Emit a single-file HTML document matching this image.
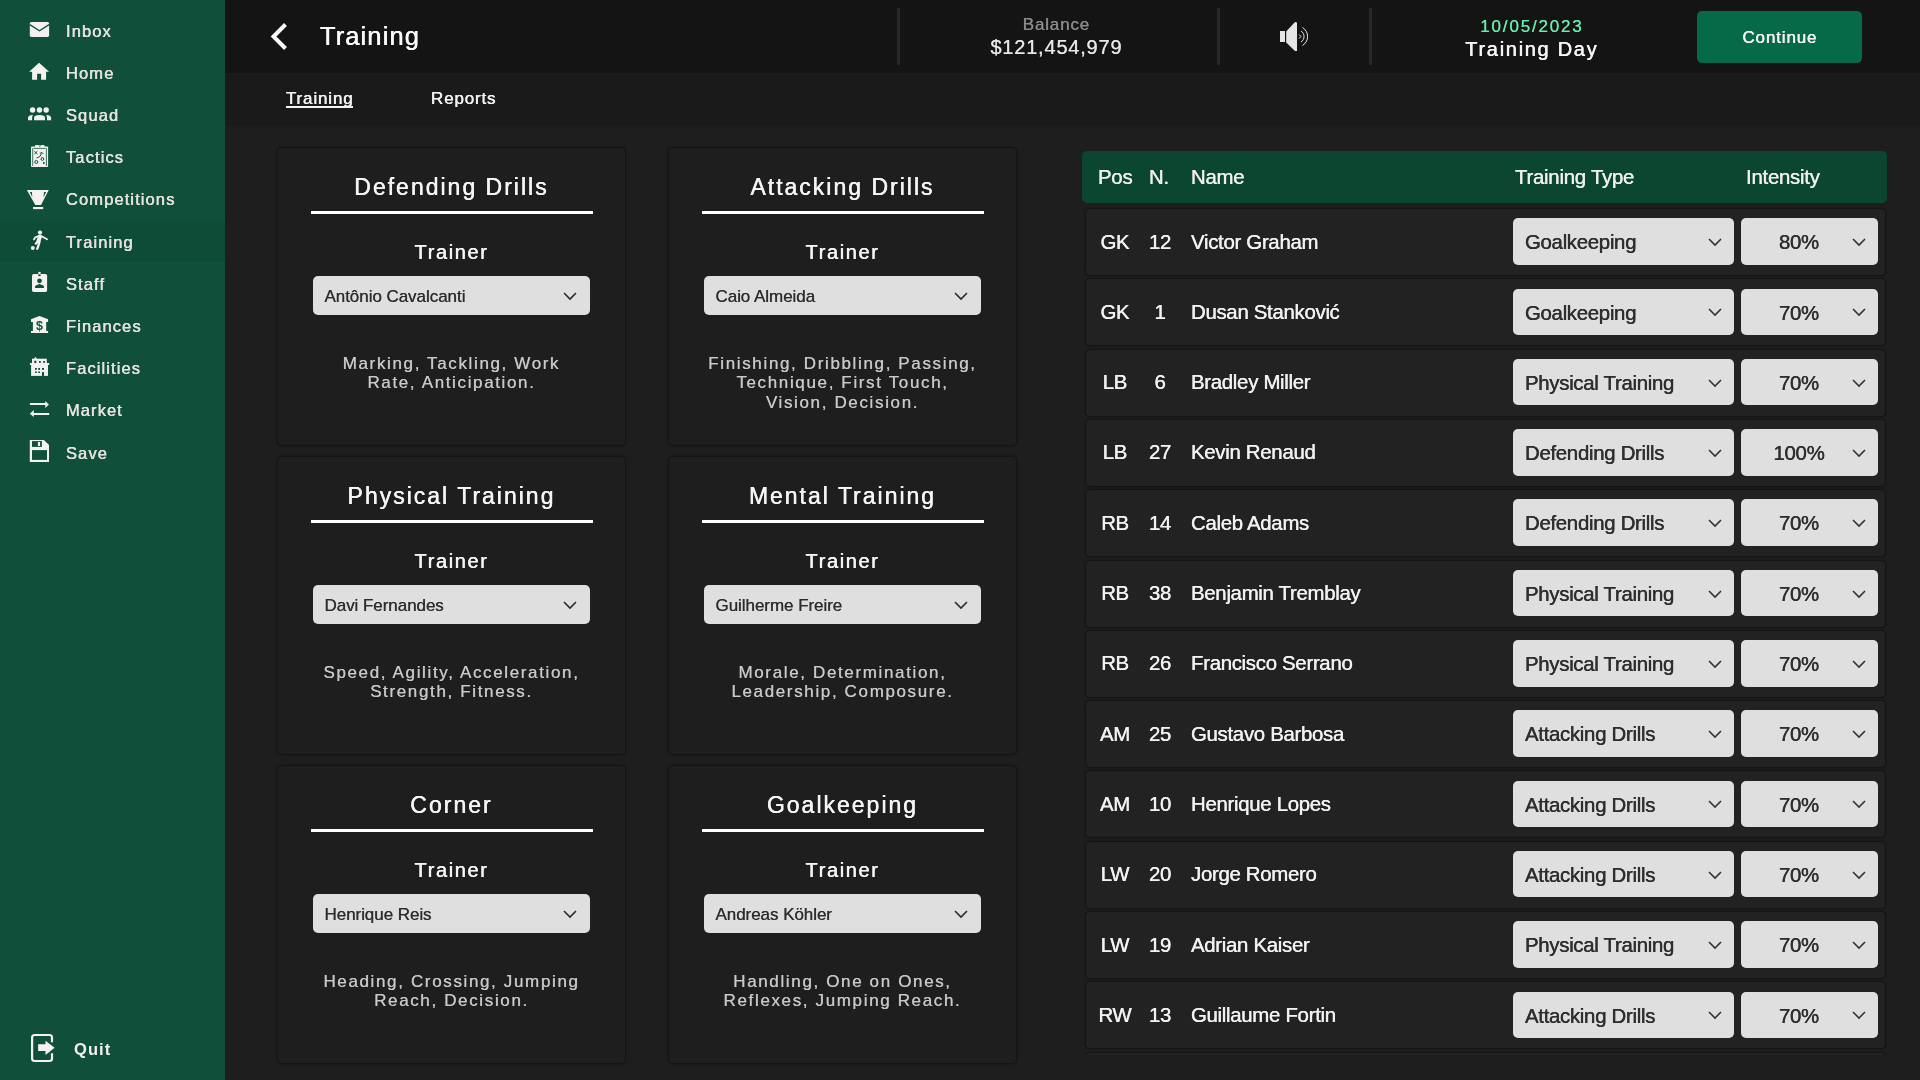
<!DOCTYPE html>
<html lang="en">
<head>
<meta charset="utf-8">
<title>Training</title>
<style>
*{box-sizing:border-box;margin:0;padding:0}
html,body{will-change:transform;width:1920px;height:1080px;overflow:hidden;background:#1e1e1e;font-family:"Liberation Sans",Arial,sans-serif;color:#fff}
#side{position:absolute;left:0;top:0;width:225px;height:1080px;background:#10503a}
.nav{position:absolute;left:0;width:225px;height:42px}
.nav.act{background:#0e4c37;height:41.3px}
#icons{position:absolute;left:0;top:0}
.nav span{position:absolute;left:66px;top:10.6px;font-size:16.5px;line-height:20px;letter-spacing:1.1px;color:#e6e2df;text-shadow:.25px 0 0 rgba(230,226,223,.8),-.25px 0 0 rgba(230,226,223,.8)}
#top{position:absolute;left:225px;top:0;width:1695px;height:73px;background:#141414}
#tabs{position:absolute;left:225px;top:73px;width:1695px;height:53px;background:#1a1a1a}
.sep{position:absolute;top:8px;width:3px;height:57px;background:#282828}
#title{position:absolute;left:95px;top:20px;font-size:25.5px;line-height:32px;letter-spacing:1.1px;color:#fafafa;text-shadow:.25px 0 0 rgba(250,250,250,.8),-.25px 0 0 rgba(250,250,250,.8)}
.tab{position:absolute;top:16px;font-size:17px;line-height:20px;letter-spacing:.85px;color:#f2f2f2;text-shadow:.25px 0 0 rgba(242,242,242,.8),-.25px 0 0 rgba(242,242,242,.8)}
.card{position:absolute;margin:-1px 0 0 0;width:349px;height:299px;border:1px solid #141414;border-radius:4.5px;background:#1e1e1e;box-shadow:0 0 3px rgba(0,0,0,.25);text-align:center}
.card h2{position:absolute;left:0;right:0;top:23.8px;font-size:23px;line-height:28px;font-weight:normal;letter-spacing:2px;color:#f5f5f5;text-shadow:.25px 0 0 rgba(245,245,245,.8),-.25px 0 0 rgba(245,245,245,.8)}
.card .ln{position:absolute;left:33px;width:282px;top:62px;height:3px;background:#fff}
.card h3{position:absolute;left:0;right:0;top:91px;font-size:20px;line-height:24px;font-weight:normal;letter-spacing:1.6px;color:#f5f5f5;text-shadow:.25px 0 0 rgba(245,245,245,.8),-.25px 0 0 rgba(245,245,245,.8)}
.sel{position:absolute;background:#dfdfdf;border-radius:5px;color:#2b2b2b;text-align:left}
.card .sel{left:34.5px;top:127px;width:277.5px;height:38.5px;font-size:17px;line-height:42px;padding-left:12px;letter-spacing:-.05px;text-shadow:.25px 0 0 rgba(43,43,43,.5),-.25px 0 0 rgba(43,43,43,.5)}
.sel svg{position:absolute;fill:none;stroke:#2b2b2b;stroke-width:1.6}
.card .sel svg{right:13px;top:14.5px;width:14px;height:10px}
.card p{position:absolute;left:10px;right:10px;top:205px;font-size:17px;line-height:19.4px;letter-spacing:1.64px;color:#c9c9c9;text-shadow:.25px 0 0 rgba(201,201,201,.5),-.25px 0 0 rgba(201,201,201,.5)}

.hc{position:absolute;text-align:center;line-height:20px}
#cont{position:absolute;left:1472px;top:10.5px;width:165px;height:52px;border-radius:5px;background:#056a47;color:#f4f4f4;text-align:center;line-height:54px;font-size:17px;letter-spacing:.85px;text-indent:.85px;text-shadow:.25px 0 0 rgba(244,244,244,.8),-.25px 0 0 rgba(244,244,244,.8)}
#tbl{position:absolute;left:1082px;top:151px;width:806px;height:904px;overflow:hidden}
#th{position:absolute;left:0;top:0;width:805px;height:52px;background:#0b4630;border-radius:5px}
#th span{position:absolute;top:14px;font-size:20.4px;line-height:24px;letter-spacing:-.25px;color:#f0f0f0;text-shadow:.25px 0 0 rgba(240,240,240,.7),-.25px 0 0 rgba(240,240,240,.7)}
.row{position:absolute;left:3px;width:801px;height:68px;background:#222;border:1px solid #141414;border-radius:4.5px;box-shadow:0 0 2px rgba(0,0,0,.25)}
.row span{position:absolute;top:20.5px;font-size:20.4px;line-height:24px;letter-spacing:-.3px;color:#f2f2f2;text-shadow:.25px 0 0 rgba(242,242,242,.7),-.25px 0 0 rgba(242,242,242,.7)}
.row .c{text-align:center}
.row .nm{left:105px}
.row .sel{top:9.3px;height:46.5px;font-size:20.4px;line-height:49px;letter-spacing:-.3px;color:#2e2e2e;text-shadow:.25px 0 0 rgba(46,46,46,.8),-.25px 0 0 rgba(46,46,46,.8)}
.row .s1{left:427px;width:221px;padding-left:12px}
.row .s2{left:655px;width:137px}
.row .s2 i{font-style:normal;position:absolute;left:0;width:116px;text-align:center}
.row .sel svg{right:12.5px;top:18.8px;width:14px;height:10px;stroke:#333}
.card>*{margin-top:1px}
</style>
</head>
<body>
<div id="side">
<!--NAV-->
<div class="nav" style="top:10.0px"><span>Inbox</span></div>
<div class="nav" style="top:52.2px"><span>Home</span></div>
<div class="nav" style="top:94.4px"><span>Squad</span></div>
<div class="nav" style="top:136.6px"><span>Tactics</span></div>
<div class="nav" style="top:178.8px"><span>Competitions</span></div>
<div class="nav act" style="top:221.0px"><span>Training</span></div>
<div class="nav" style="top:263.2px"><span>Staff</span></div>
<div class="nav" style="top:305.4px"><span>Finances</span></div>
<div class="nav" style="top:347.6px"><span>Facilities</span></div>
<div class="nav" style="top:389.8px"><span>Market</span></div>
<div class="nav" style="top:432.0px"><span>Save</span></div>
<div class="nav quit" style="top:1028px"><span style="left:74px;font-weight:bold;text-shadow:none;color:#f2efed">Quit</span></div>
<svg id="icons" width="225" height="1080" viewBox="0 0 225 1080" fill="#f4f2f0">
<rect x="29.8" y="22" width="19.3" height="14.9" rx="1.6"/><path d="M29.8 24.600 L39.450 30.700 L49.100 24.600" fill="none" stroke="#10503a" stroke-width="1.300"/>
<path transform="translate(27.1,59.8)" d="M10 20v-6h4v6h5v-8h3L12 3 2 12h3v8z"/>
<circle cx="32.600" cy="110" r="2.700"/><circle cx="39.500" cy="110" r="2.700"/><circle cx="46.200" cy="110" r="2.700"/><path d="M34.100 120.200 V117.600 Q34.100 115 39.500 115 Q45 115 45 117.600 V120.200 Z"/><path d="M28 120.200 V117.800 Q28 115.300 32.900 115 Q32.100 116.500 32.100 118 V120.200 Z"/><path d="M51.100 120.200 V117.800 Q51.100 115.300 46.200 115 Q47 116.500 47 118 V120.200 Z"/>
<rect x="31" y="146.400" width="17.100" height="20.700" rx=".8"/><rect x="35" y="145" width="9.600" height="3" rx="1"/><g fill="none" stroke="#10503a"><path d="M32.700 148.300 V166 M46.400 148.300 V166 M33.500 148.400 H45.600" stroke-width=".8"/><path d="M38.800 145.200 L39.800 146.600 L40.800 145.200" stroke-width=".7"/><path d="M34.400 151.200 L37.400 154 M37.400 151.200 L34.400 154" stroke-width="1"/><path d="M36.500 158 Q40.500 157.500 41.500 153.500" stroke-width="1"/><path d="M39.800 153.600 L41.800 152.300 L43.400 154" stroke-width="1"/><circle cx="42.400" cy="159" r="1.400" stroke-width="1"/><circle cx="36.300" cy="162" r="1.500" stroke-width="1"/></g><circle cx="43.800" cy="163" r="1" fill="#10503a"/>
<path d="M26.900 189.900 H48.800 L41 205 H35.300 Z"/><rect x="33" y="207" width="10.200" height="2.100"/><path d="M29.900 192 H31.900 L32.300 197.200 Z M44 192 H46 L43.500 197.400 Z" fill="#10503a"/>
<circle cx="40" cy="232.500" r="2.100"/><circle cx="32.800" cy="248" r="2"/><g fill="none" stroke="#f4f2f0" stroke-linecap="round" stroke-linejoin="round"><path d="M40 236.500 L38.500 241" stroke-width="4"/><path d="M38.500 236 L35.300 237.300 L33.900 239.400" stroke-width="1.800"/><path d="M41.500 236.200 L44.800 238 L47 239.300" stroke-width="1.800"/><path d="M37.800 241.500 L35.900 243.600" stroke-width="2.400"/><path d="M39.500 242 L38.300 246 L37.200 248.800" stroke-width="2.300"/></g>
<rect x="32" y="274" width="15.100" height="17.900" rx="1.700"/><rect x="38.300" y="271.900" width="2.300" height="3"/><rect x="38.300" y="274.300" width="2.300" height="1.800" fill="#10503a"/><circle cx="39.500" cy="280.800" r="2.400" fill="#10503a"/><path d="M35 288 V286.600 Q35 285.300 39.500 284 Q44 285.300 44 286.600 V288 Z" fill="#10503a"/>
<path d="M39.500 316 L48.100 319.300 V322 H46.200 V331 H48.100 V333 H31 V331 H32.900 V322 H31 V319.300 Z"/><text x="39.500" y="329.600" font-size="12.500" font-weight="bold" text-anchor="middle" fill="#10503a" font-family="Liberation Sans,sans-serif">$</text>
<rect x="32" y="358.700" width="14.800" height="5"/><path d="M33.600 358.800 L35.400 356.900 L37.200 358.800 Z"/><rect x="29.900" y="362.900" width="19.300" height="2.200" rx=".6"/><rect x="31.100" y="364.500" width="16.900" height="11.400"/><g fill="#10503a"><path d="M34.300 363 V361.500 Q34.300 360.500 35.300 360.500 Q36.300 360.500 36.300 361.500 V363 Z"/><rect x="39" y="361" width="1.800" height="1.800"/><rect x="43.200" y="361" width="1.800" height="1.800"/><rect x="35" y="368" width="1.800" height="1.800"/><rect x="38.200" y="368" width="1.800" height="1.800"/><rect x="42" y="368" width="2" height="1.800"/><rect x="35" y="371.500" width="1.800" height="1.500"/><rect x="38.200" y="371.500" width="1.800" height="1.500"/><rect x="42" y="372" width="2" height="4"/></g>
<path d="M29.900 403.100 H45.300 V400.900 L48.900 404.400 L45.300 408 V405 H29.900 Z"/><path d="M49.200 413.100 H33.800 V409.900 L29.800 413.700 L33.800 417.100 V415 H49.200 Z"/>
<path d="M29.800 440 H43.900 L49 444.900 V462.100 H29.800 Z"/><rect x="32" y="441.100" width="9.900" height="5.800" fill="#10503a"/><rect x="37.900" y="442" width="2.200" height="4"/><rect x="32" y="450.100" width="15" height="9.800" fill="#10503a"/>
<path d="M52 1042.300 V1037.500 Q52 1035 49.500 1035 H34.600 Q32.100 1035 32.100 1037.500 V1058.500 Q32.100 1061 34.600 1061 H49.500 Q52 1061 52 1058.500 V1053.200" fill="none" stroke="#f4f2f0" stroke-width="2.200"/><path d="M38.100 1044.300 H45.500 V1040.800 L54.600 1047.800 L45.500 1055 V1051 H38.100 Z"/>
</svg>
<!--/NAV-->
</div>
<div id="top">
<!--TOP-->
<svg style="position:absolute;left:40px;top:20px" width="30" height="34" viewBox="0 0 30 34"><path d="M20.5 4.500 L8.5 16.500 L20.500 28.500" fill="none" stroke="#fafafa" stroke-width="4"/></svg>
<div id="title">Training</div>
<div class="sep" style="left:672px"></div>
<div class="sep" style="left:992px"></div>
<div class="sep" style="left:1144px"></div>
<div class="hc" style="left:671px;width:320px;top:15px;font-size:17px;color:#8c8c8c;letter-spacing:.85px;text-indent:.85px;text-shadow:.25px 0 0 rgba(140,140,140,.6),-.25px 0 0 rgba(140,140,140,.6)">Balance</div>
<div class="hc" style="left:671px;width:320px;top:34.6px;font-size:20px;color:#e8e8e8;letter-spacing:.8px;text-indent:.8px;line-height:24px;text-shadow:.25px 0 0 rgba(232,232,232,.5),-.25px 0 0 rgba(232,232,232,.5)">$121,454,979</div>
<svg style="position:absolute;left:1053px;top:20px" width="34" height="34" viewBox="0 0 34 34"><rect x="2" y="11" width="5" height="11" fill="#e6e6e6"/><path d="M8.200 11.400 L17 2 L19 2.500 L19 31 L17 31 L8.200 22.600Z" fill="#e6e6e6"/><path d="M21 14.500 L23 16.500 L21 18.500 M23 11 A6.500 6.500 0 0 1 23 22 M24.500 7.500 A10.500 10.500 0 0 1 24.500 25.500" fill="none" stroke="#fff" stroke-width=".9"/></svg>
<div class="hc" style="left:1146px;width:320px;top:16.7px;font-size:17px;color:#69f0ae;letter-spacing:1.8px;text-indent:1.8px;text-shadow:.25px 0 0 rgba(105,240,174,.5),-.25px 0 0 rgba(105,240,174,.5)">10/05/2023</div>
<div class="hc" style="left:1146px;width:320px;top:36.6px;font-size:20px;color:#f5f5f5;letter-spacing:1.7px;text-indent:1.7px;line-height:24px;text-shadow:.25px 0 0 rgba(245,245,245,.85),-.25px 0 0 rgba(245,245,245,.85)">Training Day</div>
<div id="cont">Continue</div>
<!--/TOP-->
</div>
<div id="tabs">
<div class="tab" style="left:61px">Training<i style="position:absolute;left:0;right:.85px;top:17.3px;height:1.8px;background:#f2f2f2"></i></div>
<div class="tab" style="left:206px">Reports</div>
</div>
<!--CARDS-->
<div class="card" style="left:277px;top:148px"><h2>Defending Drills</h2><div class="ln"></div><h3>Trainer</h3><div class="sel">Antônio Cavalcanti<svg viewBox="0 0 14 10"><path d="M1 2 L7 8 L13 2"/></svg></div><p>Marking, Tackling, Work<br>Rate, Anticipation.</p></div>
<div class="card" style="left:668px;top:148px"><h2>Attacking Drills</h2><div class="ln"></div><h3>Trainer</h3><div class="sel">Caio Almeida<svg viewBox="0 0 14 10"><path d="M1 2 L7 8 L13 2"/></svg></div><p>Finishing, Dribbling, Passing,<br>Technique, First Touch,<br>Vision, Decision.</p></div>
<div class="card" style="left:277px;top:457px"><h2>Physical Training</h2><div class="ln"></div><h3>Trainer</h3><div class="sel">Davi Fernandes<svg viewBox="0 0 14 10"><path d="M1 2 L7 8 L13 2"/></svg></div><p>Speed, Agility, Acceleration,<br>Strength, Fitness.</p></div>
<div class="card" style="left:668px;top:457px"><h2>Mental Training</h2><div class="ln"></div><h3>Trainer</h3><div class="sel">Guilherme Freire<svg viewBox="0 0 14 10"><path d="M1 2 L7 8 L13 2"/></svg></div><p>Morale, Determination,<br>Leadership, Composure.</p></div>
<div class="card" style="left:277px;top:766px"><h2>Corner</h2><div class="ln"></div><h3>Trainer</h3><div class="sel">Henrique Reis<svg viewBox="0 0 14 10"><path d="M1 2 L7 8 L13 2"/></svg></div><p>Heading, Crossing, Jumping<br>Reach, Decision.</p></div>
<div class="card" style="left:668px;top:766px"><h2>Goalkeeping</h2><div class="ln"></div><h3>Trainer</h3><div class="sel">Andreas Köhler<svg viewBox="0 0 14 10"><path d="M1 2 L7 8 L13 2"/></svg></div><p>Handling, One on Ones,<br>Reflexes, Jumping Reach.</p></div>
<!--/CARDS-->
<!--TABLE-->
<div id="tbl">
<div id="th"><span style="left:16px">Pos</span><span style="left:67px">N.</span><span style="left:109px">Name</span><span style="left:433px">Training Type</span><span style="left:664px">Intensity</span></div>
<div class="row" style="top:57.0px"><span class="c" style="left:1px;width:56px">GK</span><span class="c" style="left:52px;width:44px">12</span><span class="nm">Victor Graham</span><div class="sel s1">Goalkeeping<svg viewBox="0 0 14 10"><path d="M1 2 L7 8 L13 2"/></svg></div><div class="sel s2"><i>80%</i><svg viewBox="0 0 14 10"><path d="M1 2 L7 8 L13 2"/></svg></div></div>
<div class="row" style="top:127.3px"><span class="c" style="left:1px;width:56px">GK</span><span class="c" style="left:52px;width:44px">1</span><span class="nm">Dusan Stanković</span><div class="sel s1">Goalkeeping<svg viewBox="0 0 14 10"><path d="M1 2 L7 8 L13 2"/></svg></div><div class="sel s2"><i>70%</i><svg viewBox="0 0 14 10"><path d="M1 2 L7 8 L13 2"/></svg></div></div>
<div class="row" style="top:197.6px"><span class="c" style="left:1px;width:56px">LB</span><span class="c" style="left:52px;width:44px">6</span><span class="nm">Bradley Miller</span><div class="sel s1">Physical Training<svg viewBox="0 0 14 10"><path d="M1 2 L7 8 L13 2"/></svg></div><div class="sel s2"><i>70%</i><svg viewBox="0 0 14 10"><path d="M1 2 L7 8 L13 2"/></svg></div></div>
<div class="row" style="top:267.9px"><span class="c" style="left:1px;width:56px">LB</span><span class="c" style="left:52px;width:44px">27</span><span class="nm">Kevin Renaud</span><div class="sel s1">Defending Drills<svg viewBox="0 0 14 10"><path d="M1 2 L7 8 L13 2"/></svg></div><div class="sel s2"><i>100%</i><svg viewBox="0 0 14 10"><path d="M1 2 L7 8 L13 2"/></svg></div></div>
<div class="row" style="top:338.2px"><span class="c" style="left:1px;width:56px">RB</span><span class="c" style="left:52px;width:44px">14</span><span class="nm">Caleb Adams</span><div class="sel s1">Defending Drills<svg viewBox="0 0 14 10"><path d="M1 2 L7 8 L13 2"/></svg></div><div class="sel s2"><i>70%</i><svg viewBox="0 0 14 10"><path d="M1 2 L7 8 L13 2"/></svg></div></div>
<div class="row" style="top:408.5px"><span class="c" style="left:1px;width:56px">RB</span><span class="c" style="left:52px;width:44px">38</span><span class="nm">Benjamin Tremblay</span><div class="sel s1">Physical Training<svg viewBox="0 0 14 10"><path d="M1 2 L7 8 L13 2"/></svg></div><div class="sel s2"><i>70%</i><svg viewBox="0 0 14 10"><path d="M1 2 L7 8 L13 2"/></svg></div></div>
<div class="row" style="top:478.8px"><span class="c" style="left:1px;width:56px">RB</span><span class="c" style="left:52px;width:44px">26</span><span class="nm">Francisco Serrano</span><div class="sel s1">Physical Training<svg viewBox="0 0 14 10"><path d="M1 2 L7 8 L13 2"/></svg></div><div class="sel s2"><i>70%</i><svg viewBox="0 0 14 10"><path d="M1 2 L7 8 L13 2"/></svg></div></div>
<div class="row" style="top:549.1px"><span class="c" style="left:1px;width:56px">AM</span><span class="c" style="left:52px;width:44px">25</span><span class="nm">Gustavo Barbosa</span><div class="sel s1">Attacking Drills<svg viewBox="0 0 14 10"><path d="M1 2 L7 8 L13 2"/></svg></div><div class="sel s2"><i>70%</i><svg viewBox="0 0 14 10"><path d="M1 2 L7 8 L13 2"/></svg></div></div>
<div class="row" style="top:619.4px"><span class="c" style="left:1px;width:56px">AM</span><span class="c" style="left:52px;width:44px">10</span><span class="nm">Henrique Lopes</span><div class="sel s1">Attacking Drills<svg viewBox="0 0 14 10"><path d="M1 2 L7 8 L13 2"/></svg></div><div class="sel s2"><i>70%</i><svg viewBox="0 0 14 10"><path d="M1 2 L7 8 L13 2"/></svg></div></div>
<div class="row" style="top:689.7px"><span class="c" style="left:1px;width:56px">LW</span><span class="c" style="left:52px;width:44px">20</span><span class="nm">Jorge Romero</span><div class="sel s1">Attacking Drills<svg viewBox="0 0 14 10"><path d="M1 2 L7 8 L13 2"/></svg></div><div class="sel s2"><i>70%</i><svg viewBox="0 0 14 10"><path d="M1 2 L7 8 L13 2"/></svg></div></div>
<div class="row" style="top:760.0px"><span class="c" style="left:1px;width:56px">LW</span><span class="c" style="left:52px;width:44px">19</span><span class="nm">Adrian Kaiser</span><div class="sel s1">Physical Training<svg viewBox="0 0 14 10"><path d="M1 2 L7 8 L13 2"/></svg></div><div class="sel s2"><i>70%</i><svg viewBox="0 0 14 10"><path d="M1 2 L7 8 L13 2"/></svg></div></div>
<div class="row" style="top:830.3px"><span class="c" style="left:1px;width:56px">RW</span><span class="c" style="left:52px;width:44px">13</span><span class="nm">Guillaume Fortin</span><div class="sel s1">Attacking Drills<svg viewBox="0 0 14 10"><path d="M1 2 L7 8 L13 2"/></svg></div><div class="sel s2"><i>70%</i><svg viewBox="0 0 14 10"><path d="M1 2 L7 8 L13 2"/></svg></div></div>
<div class="row" style="top:900.6px"></div>
</div>
<!--/TABLE-->
</body>
</html>
